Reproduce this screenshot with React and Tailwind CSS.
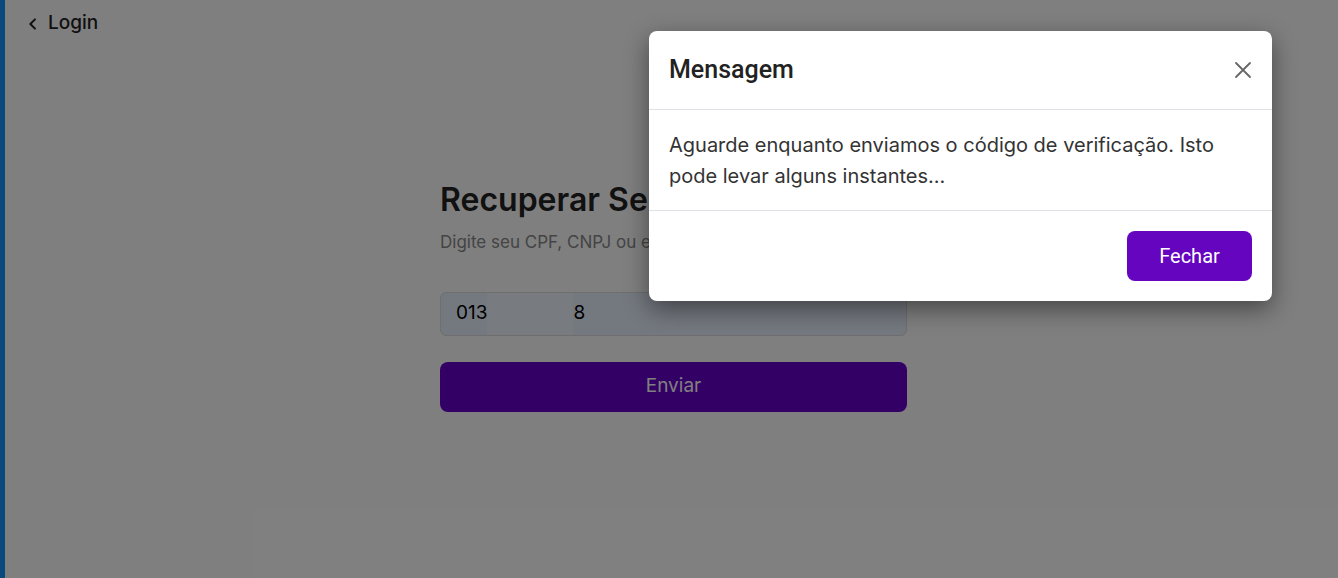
import React from "react";

export default function App() {
  return (
    <div className="relative w-[1338px] h-[578px] overflow-hidden bg-white flex" style={{ fontFamily: "Inter, 'Noto Sans', sans-serif" }}>
      <div className="w-[5px] h-full bg-[#1790fb]" />
      <div className="flex-1 flex flex-col">
        <div className="flex items-center gap-[7px] pl-[20px] pt-[11px] h-[36px] text-[19px] font-medium text-[#222]">
          <svg width="16" height="16" viewBox="0 0 24 24" fill="none" stroke="currentColor" strokeWidth="3" strokeLinecap="round" strokeLinejoin="round"><path d="M15 5l-7 7 7 7" /></svg>
          <span>Login</span>
        </div>
        <div className="flex justify-center pl-[4px]">
          <div className="w-[467px] mt-[144px] flex flex-col">
            <h1 className="text-[32px] font-semibold text-[#222] leading-[40px]">Recuperar Senha</h1>
            <p className="mt-[10px] text-[17px] text-[#888]">Digite seu CPF, CNPJ ou e-mail cadastrado</p>
            <div className="mt-[36px] h-[44px] rounded-[6px] border border-[#dcdcdc] bg-[#e8f0fe] flex items-center px-[15px] text-[19px] text-black">
              <span>013</span>
              <span className="w-[86px] h-[42px] bg-[#f0f6ff]" />
              <span>8</span>
            </div>
            <button className="mt-[26px] h-[50px] rounded-[8px] bg-[#6600cc] text-white text-[19px]">Enviar</button>
          </div>
        </div>
      </div>

      <div className="absolute inset-0 bg-black/50" />

      <div className="absolute left-[649px] top-[31px] w-[623px] bg-white rounded-[8px] shadow-[0_8px_24px_rgba(0,0,0,0.45)] flex flex-col">
        <div className="h-[79px] flex items-center justify-between px-[20px] border-b border-[#dee2e6]">
          <h2 className="text-[25px] font-medium text-[#222]" style={{ fontFamily: "Roboto, 'Noto Sans', sans-serif" }}>Mensagem</h2>
          <svg width="18" height="18" viewBox="0 0 18 18" stroke="#666" strokeWidth="1.8" strokeLinecap="round"><path d="M2 2l14 14M16 2L2 16" /></svg>
        </div>
        <div className="px-[20px] pt-[20px] pb-[18px] text-[20px] leading-[31px] text-[#333] border-b border-[#dee2e6]">
          Aguarde enquanto enviamos o código de verificação. Isto pode levar alguns instantes...
        </div>
        <div className="flex justify-end px-[20px] py-[20px]">
          <button className="w-[125px] h-[50px] rounded-[8px] bg-[#6605c0] text-white text-[20px]" style={{ fontFamily: "Roboto, 'Noto Sans', sans-serif" }}>Fechar</button>
        </div>
      </div>
    </div>
  );
}
